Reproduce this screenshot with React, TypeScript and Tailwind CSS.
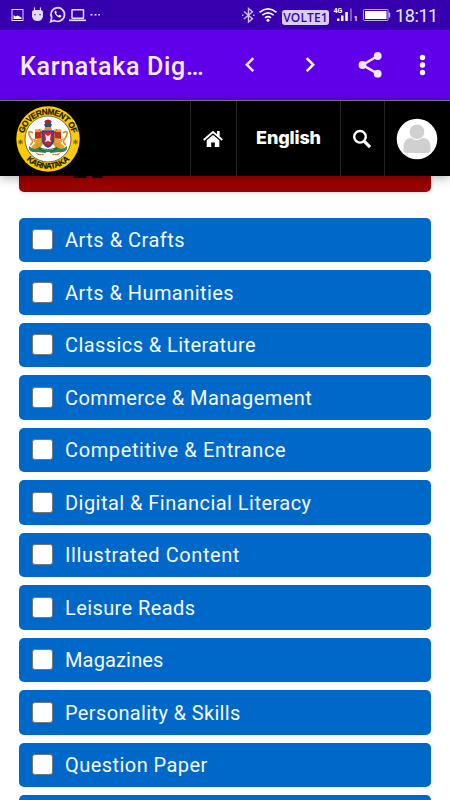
import React from 'react'

const categories = [
  { name: 'Arts & Crafts', tracking: 'tracking-[0.5px]' },
  { name: 'Arts & Humanities', tracking: 'tracking-[0.45px]' },
  { name: 'Classics & Literature', tracking: 'tracking-[0.42px]' },
  { name: 'Commerce & Management', tracking: 'tracking-[0.44px]' },
  { name: 'Competitive & Entrance', tracking: 'tracking-[0.63px]' },
  { name: 'Digital & Financial Literacy', tracking: 'tracking-[0.46px]' },
  { name: 'Illustrated Content', tracking: 'tracking-[0.58px]' },
  { name: 'Leisure Reads', tracking: 'tracking-[0.4px]' },
  { name: 'Magazines', tracking: 'tracking-[0.15px]' },
  { name: 'Personality & Skills', tracking: 'tracking-[0.36px]' },
  { name: 'Question Paper', tracking: 'tracking-[0.45px]' },
]

const StatusBar = () => {
  return (
    <div className="h-[30px] shrink-0 bg-[#3600ae] flex items-center justify-between">
      <svg width="110" height="30" viewBox="0 0 110 30" fill="none" stroke="#e6dcff">
        <rect x="12" y="9.5" width="11" height="11" strokeWidth="1" />
        <path d="M13.5 19v-4l2 1.500 2-1 4 2V19z" fill="#fff" stroke="none" />
        {/* android head */}
        <path d="M34.500 7.500v4M40.500 7.500v4" strokeWidth="1.200" />
        <path d="M32 12.500Q32 10 34.500 10h6q2.500 0 2.500 2.500v4q-1 4.500-5.500 4.500t-5.500-4.500z" fill="#e6dcff" stroke="none" />
        <path d="M35 14v1.200M40 14v1.200" stroke="#3600ae" strokeWidth="1.200" />
        {/* whatsapp */}
        <path d="M50.700 21.700l1-4a6.800 6.800 0 1 1 2.600 2.700z" strokeWidth="1.700" />
        <path d="M54.800 11q-.8 1.500.5 3.300 1.500 2.200 4 3.200 2 .4 2.200-1.700l-2-1-1 1q-1.700-.8-2.400-2.300l.7-1-.8-1.700z" fill="#fff" stroke="none" />
        <rect x="72" y="9.800" width="11.500" height="8.500" rx=".5" strokeWidth="1.500" />
        <path d="M69 20.300h17" strokeWidth="1.700" />
        <path d="M90.500 14.700h2M94.500 14.700h2M98.300 14.700h1.700" strokeWidth="1.500" />
      </svg>
      <div className="flex items-center h-full w-[210px]">
        <svg className="shrink-0" width="42" height="30" viewBox="240 0 42 30" fill="none" stroke="#cfc0f5">
          <path d="M244 11.500l8.500 7.300-4 3.200V8.500l4 3.200-8.500 7.300" strokeWidth="1.400" />
          <path d="M242 15.200h1.500M253 15.200h1.500" strokeWidth="1.500" />
          <path d="M259.500 12.300q8.500-7 17 0M262.300 15.200q5.700-4.700 11.400 0M265 17.800q3-2.400 6 0" strokeWidth="1.600" stroke="#fff" />
          <circle cx="268" cy="20.300" r="1.500" fill="#fff" stroke="none" />
        </svg>
        <span className="mt-[5px] h-[15px] w-[47px] shrink-0 rounded-[3px] bg-[#d8cef2] text-[#3600ae] text-[12px] leading-[15px] tracking-[0.1px] text-center whitespace-nowrap font-['Open_Sans',sans-serif] font-semibold">
          VOLTE1
        </span>
        <svg className="shrink-0" width="67" height="30" viewBox="329 0 67 30" fill="#fff">
          <text x="333.500" y="13" fontSize="7" fontWeight="700" fontFamily="Roboto, sans-serif">4G</text>
          <path d="M337 18.500h2.500V21H337zM341 15.500h2.500V21H341zM345.300 12h2.500v9h-2.500z" />
          <path d="M350 8.500h2V21h-2z" fill="#7958c9" />
          <text x="353.800" y="21" fontSize="7" fontWeight="700" fontFamily="Roboto, sans-serif">1</text>
          <rect x="363.500" y="9.500" width="24.500" height="11" rx="1" fill="none" stroke="#c2b2ec" />
          <rect x="365" y="11" width="21.500" height="8" />
          <rect x="388.500" y="12.500" width="1.700" height="5" fill="#c2b2ec" />
        </svg>
        <span className="-ml-[1px] text-[18px] leading-[30px] mt-[2px] tracking-[-0.4px] text-[#eee8ff] font-[Roboto,sans-serif]">18:11</span>
      </div>
    </div>
  )
}

const AppBar = () => {
  return (
    <header className="h-[70px] shrink-0 bg-[#6000ea] flex items-center justify-between pl-5">
      <h1 className="text-[25px] leading-[30px] mt-[3px] tracking-[0.7px] font-medium text-[#f3edff] whitespace-nowrap font-[Roboto,sans-serif]">
        Karnataka Dig…
      </h1>
      <svg width="220" height="70" viewBox="0 0 220 70" fill="none" stroke="#f0eaf6" strokeWidth="2.500">
        <path d="M23.300 28.200l-6.500 6.500 6.500 6.500" />
        <path d="M76.700 28.200l6.500 6.500-6.500 6.500" stroke="#fff" />
        <path d="M147.500 26l-15 9 15 8.700" />
        <g fill="#f0eaf0" stroke="none">
          <circle cx="147.700" cy="26" r="3.900" />
          <circle cx="132.500" cy="35" r="3.900" />
          <circle cx="147.700" cy="43.700" r="3.900" />
        </g>
        <g fill="#fff" stroke="none">
          <circle cx="192.500" cy="27.500" r="2.700" />
          <circle cx="192.500" cy="35" r="2.700" />
          <circle cx="192.500" cy="42.500" r="2.700" />
        </g>
      </svg>
    </header>
  )
}

const Emblem = () => {
  return (
    <svg width="66" height="68" viewBox="-33 -34 66 68">
      <defs>
        <path id="arcTop" d="M-23.300 8A24.600 24.600 0 1 1 23.300 8" />
        <path id="arcBottom" d="M-29.700 4A30 30 0 0 0 29.700 4" />
      </defs>
      <ellipse rx="31.700" ry="32.800" fill="#fecb00" />
      <circle r="23" fill="#fff" stroke="#33322c" strokeWidth=".7" />
      <g fontFamily="'Liberation Sans', sans-serif" fontWeight="700" fill="#171500" stroke="#171500" strokeWidth=".2" textAnchor="middle">
        <text fontSize="8.400">
          <textPath href="#arcTop" startOffset="50%" textLength="66">GOVERNMENT OF</textPath>
        </text>
        <text fontSize="8.200">
          <textPath href="#arcBottom" startOffset="50%" textLength="48">KARNATAKA</textPath>
        </text>
      </g>
      <g stroke="#5d5200" strokeWidth=".8">
        <path d="M-30 3h5M-27.500.5v5M-29.300 1.200l3.600 3.600M-25.700 1.200l-3.600 3.600" />
        <path d="M25 3h5M27.500.5v5M25.700 1.200l3.600 3.600M29.300 1.200l-3.600 3.600" />
      </g>
      {/* lions */}
      <g id="lion">
        <path d="M-5-3l-5-1-1 5-5-2 3 5-4 4 9 1 4-5z" fill="#e5a32d" />
        <path d="M-13-8l5-2 2 3-1 6-6 1z" fill="#c52a20" />
        <path d="M-13-10l4 1 3-1-2 3-5 0z" fill="#e5a32d" />
        <path d="M-15-6q-5-3-4 1t3 6-2 5M-10 4l-2 5-4 0M-6 2l-3 7" fill="none" stroke="#d99424" strokeWidth="1.700" />
        <path d="M-19 7q5 5 10 1l7 3v3q-8-1-13-1-5-1-4-6z" fill="#35834b" />
        <path d="M-13 13q6 4 10 1l-2 2-5 0z" fill="#d56f28" />
      </g>
      <use href="#lion" transform="scale(-1 1)" />
      <path d="M-3.500-18q3.500-3 7 0l-1 5h-5z" fill="#9e2535" />
      <path d="M-4-15h8l-1 3h-6z" fill="#344d75" />
      <path d="M-3-12h6l1 3h-8z" fill="#db9b31" />
      <path d="M-5.500-8h11v9q-1 5-5.500 7-4.500-2-5.500-7z" fill="#ce2030" stroke="#2c4190" strokeWidth="1.600" />
      <path d="M-3-5l3 2 3-2-1 5 1 3-3-1-3 1 1-3z" fill="#eee7ed" />
      <path d="M-9 8q9 4 18 0v3q-9 4-18 0z" fill="#19733d" />
      <path d="M-6 10q6 2 12 0" fill="none" stroke="#c9dcc5" strokeWidth=".8" strokeDasharray="1 .7" />
    </svg>
  )
}

const SiteHeader = () => {
  return (
    <nav className="relative z-10 h-[76px] shrink-0 bg-black border-t border-[#77766c] shadow-[0_2px_10px_rgba(0,0,0,0.3)] flex">
      <div className="w-[190px] pl-[15px] pt-1">
        <Emblem />
      </div>
      <div className="w-[46px] border-l border-[#242424] flex items-center justify-center">
        <svg className="-ml-[1px]" width="22" height="20" viewBox="0 0 22 20" fill="#fff">
          <path d="M11 6l6.300 5.300V18h-4.500v-4.500H9.200V18H4.700v-6.700z" />
          <path d="M1.700 11L11 3l9.300 8" fill="none" stroke="#fff" strokeWidth="1.900" />
          <path d="M15 2h2.700v6L15 5.500z" />
        </svg>
      </div>
      <div className="w-[104px] border-l border-[#242424] flex items-center justify-center">
        <span className="text-white text-[18px] font-extrabold tracking-[-0.15px] font-[Inter,sans-serif] -mt-[3px]">English</span>
      </div>
      <div className="w-[44px] border-l border-[#242424] flex items-center justify-center">
        <svg className="-ml-[1px]" width="20" height="20" viewBox="0 0 20 20" fill="none" stroke="#fff">
          <circle cx="8" cy="7.800" r="5.800" strokeWidth="2.400" />
          <path d="M12.300 12.300l5.800 5.800" strokeWidth="3.200" />
        </svg>
      </div>
      <div className="w-[66px] border-l border-[#242424] flex items-center justify-center">
        <svg className="-ml-[1px]" width="42" height="42" viewBox="0 0 42 42">
          <circle cx="21" cy="21" r="20.300" fill="#fff" />
          <path d="M7.500 29q0-9 8-9h11q8 0 8 9v3q0 3-3 3h-21q-3 0-3-3z" fill="#d0d0d0" />
          <circle cx="21" cy="13.800" r="7.800" fill="#d0d0d0" stroke="#fff" strokeWidth="1" />
        </svg>
      </div>
    </nav>
  )
}

const App = () => {
  return (
    <div className="w-[450px] h-[800px] overflow-hidden bg-white flex flex-col">
      <StatusBar />
      <AppBar />
      <SiteHeader />
      <main className="px-[19px]">
        <div className="h-4 rounded-b-[5px] bg-[#9c0000] shadow-[0_1px_5px_rgba(0,0,0,0.12)] flex gap-[5px] pl-[54px]">
          <div className="w-[14px] h-[2px] rounded-b-full bg-[#160000]" />
          <div className="w-[11px] h-[2px] rounded-b-full bg-[#160000]" />
        </div>
        <ul className="mt-[25.700px] flex flex-col gap-2 text-[20px] text-[#f7faff] font-[Roboto,sans-serif]">
          {categories.map((category) => (
            <li key={category.name} className="h-[44.500px] shrink-0 rounded-[5px] bg-[#0068c8] flex items-center pl-[13px]">
              <span className="w-[21px] h-[21px] shrink-0 rounded-[3px] border-[1.500px] border-[#767676] bg-white" />
              <span className={`ml-3 mt-px whitespace-nowrap ${category.tracking}`}>{category.name}</span>
            </li>
          ))}
          {/* next row, only its top edge is in view */}
          <li className="h-[44.500px] shrink-0 rounded-[5px] bg-[#0068c8]" />
        </ul>
      </main>
    </div>
  )
}

export default App
